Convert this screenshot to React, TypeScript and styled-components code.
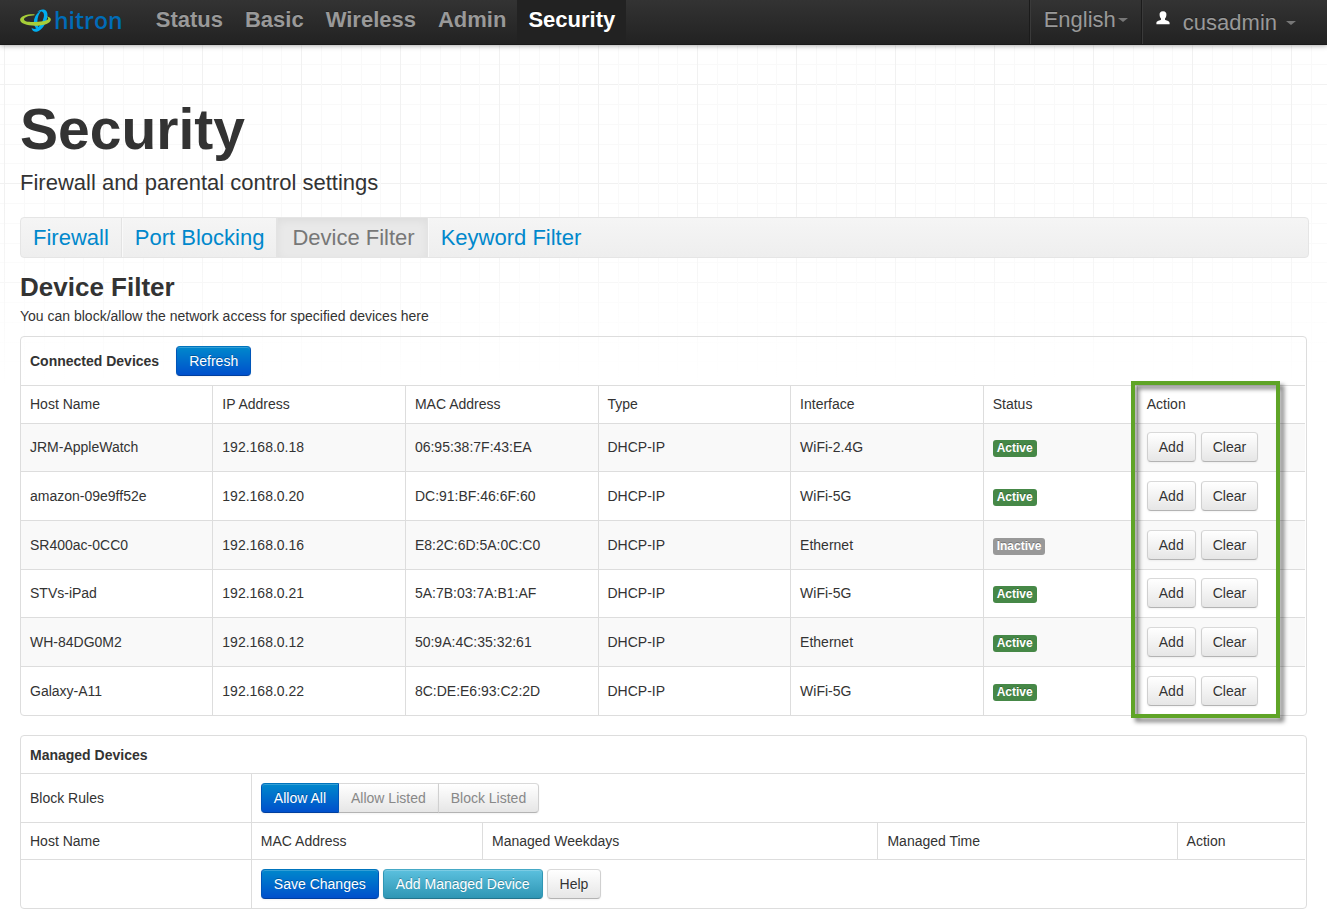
import React, { useState } from 'react';
import styled, { createGlobalStyle, css } from 'styled-components';

const GlobalStyle = createGlobalStyle`
  *, *::before, *::after { box-sizing: border-box; }
  body {
    margin: 0;
    background: #fff;
    color: #333;
    font: 14px/20px "Liberation Sans", Arial, sans-serif;
  }
  a { color: #0088cc; text-decoration: none; }
  button { font-family: inherit; cursor: pointer; }
  h1, h2, h3, p { margin: 0; }
`;

const minor = '#f9f9f9';
const major = '#f1f1f1';
const gridLines = (dir: string) =>
  `linear-gradient(${dir}, ${major} 1px, transparent 1px, transparent 20px, ${minor} 20px, ${minor} 21px, transparent 21px, transparent 40px, ${minor} 40px, ${minor} 41px, transparent 41px, transparent 60px, ${minor} 60px, ${minor} 61px, transparent 61px, transparent 79px, ${minor} 79px, ${minor} 80px, transparent 80px)`;

const Page = styled.div`
  background-image:
    linear-gradient(to bottom, rgba(255, 255, 255, 0) 200px, #fff 385px),
    ${gridLines('to right')},
    ${gridLines('to bottom')};
  background-size: auto, 99px 99px, 99px 99px;
  background-position: 0 0, 4px 84px, 4px 84px;
`;

const Navbar = styled.header`
  display: flex;
  justify-content: space-between;
  height: 45px;
  padding: 0 20px;
  background: linear-gradient(#333, #222);
  border-bottom: 1px solid #1a1a1a;
  box-shadow: 0 1px 5px rgba(0, 0, 0, 0.3);
`;

const NavGroup = styled.nav`
  display: flex;
`;

const Brand = styled.a`
  display: flex;
  align-items: center;
  gap: 3px;
  height: 40px;
  margin-right: 22px;
  color: #006cb8;
  font: 600 23px/38px "Open Sans", sans-serif;
`;

const NavLink = styled.a<{ $active?: boolean }>`
  padding: 0 11px;
  color: ${(p) => (p.$active ? '#fff' : '#999')};
  background: ${(p) => (p.$active ? '#222' : 'none')};
  font-size: 22px;
  font-weight: bold;
  line-height: 40px;
  text-shadow: 0 -1px 0 rgba(0, 0, 0, 0.25);
`;

const NavMenu = styled.button<{ $user?: boolean }>`
  display: flex;
  align-items: center;
  gap: ${(p) => (p.$user ? '13px' : '2px')};
  height: 44px;
  padding: ${(p) => (p.$user ? '1px 11px 0 13px' : '0 14px 5px 13px')};
  border: 0;
  border-left: 1px solid #3a3a3a;
  box-shadow: -1px 0 0 #1b1b1b;
  background: none;
  color: #999;
  font-size: 22px;
  line-height: 38px;
  text-shadow: 0 -1px 0 rgba(0, 0, 0, 0.25);
`;

const MenuName = styled.span`
  margin-right: -4px;
`;

const Caret = styled.span`
  border: 5px solid transparent;
  border-top: 4px solid #777;
  border-bottom-width: 0;
`;

const Main = styled.main`
  padding: 50px 20px 15px;
`;

const PageTitle = styled.h1`
  font-size: 57px;
  line-height: 68px;
`;

const Lead = styled.p`
  padding: 4px 0 18px;
  font-size: 22px;
  line-height: 32px;
`;

const SubNav = styled.nav`
  display: flex;
  box-sizing: content-box;
  width: 100%;
  height: 39px;
  border: 1px solid #e5e5e5;
  border-radius: 4px;
  background: linear-gradient(#f5f5f5, #eee);
`;

const SubLink = styled.a<{ $active?: boolean }>`
  padding: 0 12px;
  border-left: 1px solid #f9f9f9;
  border-right: 1px solid #e3e3e3;
  font-size: 22px;
  line-height: 39px;
  &:first-child { border-left: 0; }
  &:last-child { border-right: 0; }
  ${(p) =>
    p.$active &&
    css`
      padding: 0 12px 0 14px;
      border-color: #e3e3e3;
      background: #e9e9e9;
      box-shadow: inset 0 3px 8px rgba(0, 0, 0, 0.05);
      color: #777;
    `}
`;

const SectionTitle = styled.h2`
  padding-top: 12px;
  font-size: 26px;
  line-height: 34px;
`;

const Description = styled.p`
  padding: 2px 0 10px;
`;

const Panel = styled.section`
  position: relative;
  margin-bottom: 19px;
  padding-right: 1px;
  border: 1px solid #ddd;
  border-radius: 4px;
`;

const PanelHead = styled.div<{ $tall?: boolean }>`
  display: flex;
  align-items: center;
  gap: 17px;
  height: ${(p) => (p.$tall ? '48px' : '37px')};
  padding: 0 9px;
`;

const PanelTitle = styled.h3`
  font-size: 14px;
  line-height: 20px;
`;

const Table = styled.table`
  width: 100%;
  table-layout: fixed;
  border-collapse: separate;
  border-spacing: 0;
`;

const cell = css`
  padding: 0 9px;
  border-top: 1px solid #ddd;
  text-align: left;
  font-weight: normal;
  vertical-align: middle;
  &:not(:first-child) { border-left: 1px solid #ddd; }
`;

const HeadCell = styled.th`
  ${cell}
  height: 37px;
`;

const Cell = styled.td`
  ${cell}
  height: 49px;
`;

const DeviceHead = styled.tr`
  ${HeadCell} { height: 38px; padding-bottom: 1px; }
`;

const DeviceRow = styled.tr`
  td { padding-bottom: 1px; }
  &:nth-child(odd) td { background: #f9f9f9; }
  &:nth-child(3n + 1) td { height: 48px; }
`;

const Col = styled.col<{ $w?: string }>`
  width: ${(p) => p.$w ?? 'auto'};
`;

const Badge = styled.span<{ $active: boolean }>`
  display: inline-block;
  margin-top: 2px;
  padding: 0 4px;
  border-radius: 3px;
  background: ${(p) => (p.$active ? '#468847' : '#999')};
  color: #fff;
  font-size: 12px;
  font-weight: bold;
  line-height: 17px;
  vertical-align: middle;
  text-shadow: 0 -1px 0 rgba(0, 0, 0, 0.25);
`;

const tones = {
  plain: css`
    color: #333;
    background: linear-gradient(#fff, #e6e6e6);
    border-color: #d9d9d9 #d0d0d0 #b3b3b3;
    text-shadow: 0 1px 1px rgba(255, 255, 255, 0.75);
  `,
  muted: css`
    color: #888;
    background: linear-gradient(#fff, #e6e6e6);
    border-color: #d9d9d9 #d0d0d0 #b3b3b3;
  `,
  primary: css`
    color: #fff;
    background: linear-gradient(#0088cc, #0050cc);
    border-color: #0074bd #0055b8 #003f9e;
    text-shadow: 0 -1px 0 rgba(0, 0, 0, 0.25);
  `,
  info: css`
    color: #fff;
    background: linear-gradient(#5bc0de, #2f96b4);
    border-color: #46a9c6 #2f96b4 #24748c;
    text-shadow: 0 -1px 0 rgba(0, 0, 0, 0.25);
  `,
};

const Button = styled.button<{ $tone?: keyof typeof tones }>`
  height: 30px;
  padding: 0 12px;
  border: 1px solid;
  border-radius: 4px;
  box-shadow: inset 0 1px 0 rgba(255, 255, 255, 0.2), 0 1px 2px rgba(0, 0, 0, 0.05);
  font-size: 14px;
  line-height: 28px;
  ${(p) => tones[p.$tone ?? 'plain']}
`;

const Actions = styled.div<{ $compact?: boolean }>`
  display: flex;
  gap: ${(p) => (p.$compact ? '5px' : '4px')};
  ${Button} { padding: 0 ${(p) => (p.$compact ? '11px' : '12px')}; }
`;

const ButtonGroup = styled.div`
  display: flex;
  ${Button} { border-radius: 0; }
  ${Button}:not(:first-child) { margin-left: -1px; }
  ${Button}:first-child { border-radius: 4px 0 0 4px; z-index: 1; }
  ${Button}:last-child { border-radius: 0 4px 4px 0; }
`;

const Highlight = styled.div`
  position: absolute;
  top: 44px;
  right: 26px;
  bottom: -3px;
  width: 149px;
  border: 4px solid #5fa427;
  filter: drop-shadow(4px 4px 2px rgba(0, 0, 0, 0.5));
  pointer-events: none;
`;

const Logo = () => (
  <svg width="31" height="24" viewBox="0 0 31 24" aria-hidden="true">
    <path
      fill="#00aeef"
      d="M17 4.500C19 2 21.500 1 24 1.600C27.800 2.800 28.300 7.500 26.500 12.500C24.500 18.500 21 22.300 17.500 23.500C14.500 24.300 11.800 23 11.500 19.500C13 21.500 15.500 21.300 17.800 19.500C20.500 17.300 22.800 13.500 23.700 9.500C24.500 6 23.600 3.800 21.500 3.400C20 3.200 18.500 3.600 17 4.500Z"
    />
    <path
      fill="#00aeef"
      d="M21.500 2.500C19 5 17.600 9 17.400 13C17.200 17 18 20 20.500 21.500C16.500 22 13.500 18.500 13.900 13.500C14.200 9 17 4.500 21.500 2.500Z"
    />
    <path
      fill="#a6ce39"
      d="M14.500 7.300C9 7.500 4 9.200 4 11.500C4 13.600 9.500 14.300 16 13.900C22.500 13.600 27.800 12.600 28.100 11C28.300 9.800 27.500 9 26 8.300C29 8.800 31 10 30.900 11.800C30.500 15.700 23 17.900 15 17.800C7 17.600 0 15.600 .1 11.800C.3 8 7 6 14.500 6.300Z"
    />
  </svg>
);

const UserIcon = () => (
  <svg width="14" height="14" viewBox="0 0 14 14" fill="#fff" aria-hidden="true">
    <path d="M7 .2C9.800 .2 10.600 2 10.400 3.900C10.300 5.600 9.600 6.800 9 7.600V8.800C9.800 9.800 13.600 9.600 13.600 12V13.200H.4V12C.4 9.600 4.200 9.800 5 8.800V7.600C4.400 6.800 3.700 5.600 3.600 3.900C3.400 2 4.200 .2 7 .2Z" />
  </svg>
);

const IconSlot = styled.span`
  display: flex;
  padding-bottom: 10px;
`;

const navItems = ['Status', 'Basic', 'Wireless', 'Admin', 'Security'];
const subItems = ['Firewall', 'Port Blocking', 'Device Filter', 'Keyword Filter'];
const rules = ['Allow All', 'Allow Listed', 'Block Listed'];
const devices = [
  ['JRM-AppleWatch', '192.168.0.18', '06:95:38:7F:43:EA', 'DHCP-IP', 'WiFi-2.4G', 'Active'],
  ['amazon-09e9ff52e', '192.168.0.20', 'DC:91:BF:46:6F:60', 'DHCP-IP', 'WiFi-5G', 'Active'],
  ['SR400ac-0CC0', '192.168.0.16', 'E8:2C:6D:5A:0C:C0', 'DHCP-IP', 'Ethernet', 'Inactive'],
  ['STVs-iPad', '192.168.0.21', '5A:7B:03:7A:B1:AF', 'DHCP-IP', 'WiFi-5G', 'Active'],
  ['WH-84DG0M2', '192.168.0.12', '50:9A:4C:35:32:61', 'DHCP-IP', 'Ethernet', 'Active'],
  ['Galaxy-A11', '192.168.0.22', '8C:DE:E6:93:C2:2D', 'DHCP-IP', 'WiFi-5G', 'Active'],
];

export default function App() {
  const [rule, setRule] = useState('Allow All');
  return (
    <Page>
      <GlobalStyle />
      <Navbar>
        <NavGroup aria-label="Main">
          <Brand href="#"><Logo />hitron</Brand>
          {navItems.map((n) => (
            <NavLink key={n} href="#" $active={n === 'Security'}>{n}</NavLink>
          ))}
        </NavGroup>
        <NavGroup aria-label="Account">
          <NavMenu type="button">English<Caret /></NavMenu>
          <NavMenu type="button" $user>
            <IconSlot><UserIcon /></IconSlot>
            <MenuName>cusadmin</MenuName>
            <Caret />
          </NavMenu>
        </NavGroup>
      </Navbar>
      <Main>
        <PageTitle>Security</PageTitle>
        <Lead>Firewall and parental control settings</Lead>
        <SubNav aria-label="Security">
          {subItems.map((n) => (
            <SubLink key={n} href="#" $active={n === 'Device Filter'}>{n}</SubLink>
          ))}
        </SubNav>
        <SectionTitle>Device Filter</SectionTitle>
        <Description>You can block/allow the network access for specified devices here</Description>

        <Panel>
          <PanelHead $tall>
            <PanelTitle>Connected Devices</PanelTitle>
            <Button type="button" $tone="primary">Refresh</Button>
          </PanelHead>
          <Table>
            <colgroup>
              <Col $w="14.9%" />
              <Col $w="15%" />
              <Col $w="15%" />
              <Col $w="15%" />
              <Col $w="15%" />
              <Col $w="12%" />
              <Col />
            </colgroup>
            <thead>
              <DeviceHead>
                {['Host Name', 'IP Address', 'MAC Address', 'Type', 'Interface', 'Status', 'Action'].map((h) => (
                  <HeadCell key={h} scope="col">{h}</HeadCell>
                ))}
              </DeviceHead>
            </thead>
            <tbody>
              {devices.map((d) => (
                <DeviceRow key={d[0]}>
                  {d.slice(0, 5).map((v, i) => <Cell key={i}>{v}</Cell>)}
                  <Cell><Badge $active={d[5] === 'Active'}>{d[5]}</Badge></Cell>
                  <Cell>
                    <Actions $compact>
                      <Button type="button">Add</Button>
                      <Button type="button">Clear</Button>
                    </Actions>
                  </Cell>
                </DeviceRow>
              ))}
            </tbody>
          </Table>
          <Highlight />
        </Panel>

        <Panel>
          <PanelHead>
            <PanelTitle>Managed Devices</PanelTitle>
          </PanelHead>
          <Table>
            <colgroup>
              <Col />
              <Col $w="18%" />
              <Col $w="30.8%" />
              <Col $w="23.3%" />
              <Col $w="10%" />
            </colgroup>
            <tbody>
              <tr>
                <Cell>Block Rules</Cell>
                <Cell colSpan={4}>
                  <ButtonGroup role="group" aria-label="Block Rules">
                    {rules.map((r) => (
                      <Button
                        key={r}
                        type="button"
                        $tone={r === rule ? 'primary' : 'muted'}
                        aria-pressed={r === rule}
                        onClick={() => setRule(r)}
                      >
                        {r}
                      </Button>
                    ))}
                  </ButtonGroup>
                </Cell>
              </tr>
              <tr>
                {['Host Name', 'MAC Address', 'Managed Weekdays', 'Managed Time', 'Action'].map((h) => (
                  <HeadCell key={h} scope="col">{h}</HeadCell>
                ))}
              </tr>
              <tr>
                <Cell />
                <Cell colSpan={4}>
                  <Actions>
                    <Button type="button" $tone="primary">Save Changes</Button>
                    <Button type="button" $tone="info">Add Managed Device</Button>
                    <Button type="button">Help</Button>
                  </Actions>
                </Cell>
              </tr>
            </tbody>
          </Table>
        </Panel>
      </Main>
    </Page>
  );
}
